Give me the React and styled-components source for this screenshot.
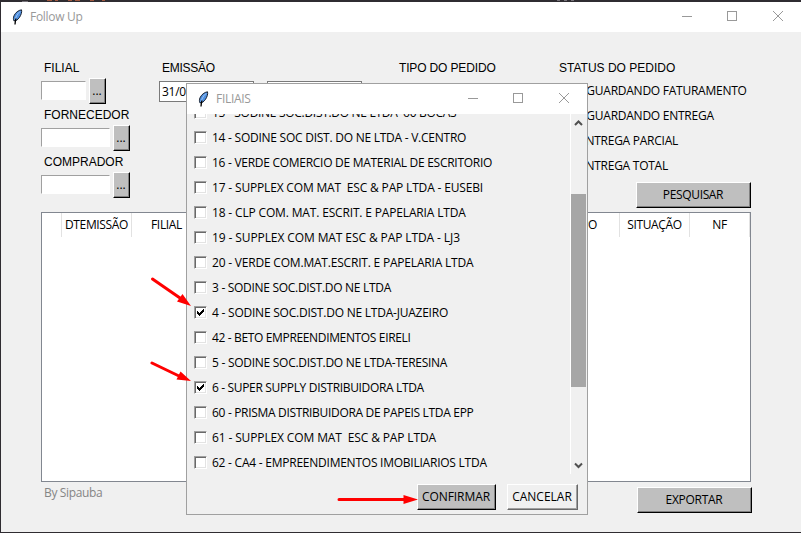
import React from 'react';
import styled, { createGlobalStyle } from 'styled-components';

const Global = createGlobalStyle`
  * { box-sizing: border-box; }
  body { margin: 0; overflow: hidden; }
`;

const UI_FONT = '"Open Sans", "Noto Sans", sans-serif';
const LABEL_FONT = '"Liberation Sans", Arial, sans-serif';

const Desktop = styled.div`
  position: relative;
  width: 801px;
  height: 533px;
  padding: 2px 0 1px 1px;
  background: #2f2c31;
  font: 12px/16px ${UI_FONT};
  color: #000;
  overflow: hidden;
`;

const EditorStrip = styled.svg`
  position: absolute;
  left: 0;
  top: 0;
`;

const Window = styled.main`
  display: flex;
  flex-direction: column;
  height: 530px;
  background: #f0f0f0;
`;

const TitleBar = styled.header`
  display: flex;
  align-items: center;
  flex: none;
  height: 30px;
  padding-left: 9px;
  background: #fff;
  color: #999;
`;

const Title = styled.span`
  flex: 1;
  margin-left: 6px;
  letter-spacing: -0.3px;
`;

const Controls = styled.svg`
  flex: none;
`;

const Text = styled.span`
  white-space: pre;
  letter-spacing: ${(p) => p.$track ?? -0.25}px;
`;

const Form = styled.section`
  display: grid;
  grid-template-columns: 118px 240px 160px 192px;
  height: 180px;
  padding: 27px 0 0 40px;
`;

const Column = styled.div`
  display: flex;
  flex-direction: column;
`;

const Label = styled.label`
  flex: none;
  height: 18px;
  margin-bottom: 1px;
  padding-left: ${(p) => p.$indent ?? 3}px;
  font: 12px/18px ${LABEL_FONT};
  letter-spacing: ${(p) => p.$track ?? 0}px;
  white-space: nowrap;
`;

const FieldRow = styled.div`
  display: flex;
  flex: none;
  gap: 3px;
  height: 26px;
  margin-bottom: 2px;
`;

const Entry = styled.div`
  width: ${(p) => p.$width}px;
  height: 19px;
  margin-top: 3px;
  background: #fff;
  border: 1px solid;
  border-color: #a0a0a0 #fff #fff #a0a0a0;
`;

const DateRow = styled(FieldRow)`
  gap: 13px;
`;

const DateEntry = styled.div`
  width: 95px;
  height: 21px;
  margin-top: 3px;
  padding: 1px 2px;
  background: #fff;
  border: 1px solid #7a7a7a;
  line-height: 18px;
  letter-spacing: -0.25px;
`;

const Button = styled.button`
  display: flex;
  align-items: center;
  justify-content: center;
  flex: none;
  width: ${(p) => p.$width}px;
  height: 26px;
  padding: 0 1px 0 0;
  border: 1px solid;
  border-color: ${(p) => (p.$light ? '#fff #696969 #696969 #fff' : '#fff #000 #000 #fff')};
  box-shadow: inset -1px -1px ${(p) => (p.$light ? '#a0a0a0' : '#808080')};
  background: ${(p) => (p.$light ? '#f0f0f0' : '#bfbfbf')};
  color: #000;
  font: 12px/16px ${UI_FONT};
`;

const CheckRow = styled.div`
  display: flex;
  align-items: center;
  flex: none;
  gap: 5px;
  height: 25px;
  padding-left: ${(p) => p.$indent}px;
`;

const Box = styled.span`
  display: block;
  width: 13px;
  height: 13px;
  background: #fff;
  border: 1px solid;
  border-color: #a0a0a0 #fff #fff #a0a0a0;
  box-shadow: inset 1px 1px #696969, inset -1px -1px #e3e3e3;

  svg { display: block; margin: -1px; }
`;

const SearchButton = styled(Button)`
  margin: 4px 0 0 77px;
`;

const Table = styled.section`
  flex: none;
  width: 710px;
  height: 270px;
  margin-left: 40px;
  background: #fff;
  border: 1px solid #828790;
`;

const TableHead = styled.div`
  display: grid;
  grid-template-columns: 20px 70px 70px 70px 70px 70px 70px 68px 70px 70px 60px;
  height: 24px;
`;

const HeadCell = styled.div`
  display: flex;
  align-items: center;
  justify-content: center;
  border-right: 1px solid #e2e2e2;
  white-space: nowrap;
`;

const Footer = styled.footer`
  display: flex;
  justify-content: space-between;
  width: 711px;
  margin: 5px 0 0 40px;
`;

const Credit = styled.span`
  margin: -2px 0 0 3px;
  color: #858585;
  letter-spacing: -0.35px;
`;

const Dialog = styled.section`
  position: absolute;
  left: 186px;
  top: 83px;
  display: flex;
  flex-direction: column;
  width: 402px;
  height: 432px;
  background: #f0f0f0;
  border: 1px solid #a0a0a0;
`;

const ListArea = styled.div`
  display: flex;
  flex: none;
  height: 360px;
  overflow: hidden;
`;

const List = styled.div`
  display: flex;
  flex: 1;
  flex-direction: column;
  min-width: 0;
  margin-top: -14px;
`;

const Scrollbar = styled.div`
  display: flex;
  flex-direction: column;
  width: 17px;
  border-left: 1px solid #fff;

  svg { display: block; flex: none; }
`;

const Track = styled.div`
  flex: 1;
  padding-top: 63px;
`;

const Thumb = styled.div`
  width: 15px;
  height: 193px;
  background: #a6a6a6;
`;

const Actions = styled.div`
  display: flex;
  justify-content: flex-end;
  gap: 11px;
  padding: 10px 9px 0 0;
`;

const Arrows = styled.svg`
  position: absolute;
  left: 0;
  top: 0;
  pointer-events: none;
`;

const BRANCHES = [
  { name: '15 - SODINE SOC.DIST.DO NE LTDA  60 BOCAS', track: -0.3 },
  { name: '14 - SODINE SOC DIST. DO NE LTDA - V.CENTRO', track: -0.25 },
  { name: '16 - VERDE COMERCIO DE MATERIAL DE ESCRITORIO', track: -0.28 },
  { name: '17 - SUPPLEX COM MAT  ESC & PAP LTDA - EUSEBI', track: -0.17 },
  { name: '18 - CLP COM. MAT. ESCRIT. E PAPELARIA LTDA', track: -0.16 },
  { name: '19 - SUPPLEX COM MAT ESC & PAP LTDA - LJ3', track: -0.1 },
  { name: '20 - VERDE COM.MAT.ESCRIT. E PAPELARIA LTDA', track: -0.2 },
  { name: '3 - SODINE SOC.DIST.DO NE LTDA', track: -0.3 },
  { name: '4 - SODINE SOC.DIST.DO NE LTDA-JUAZEIRO', track: -0.23, checked: true },
  { name: '42 - BETO EMPREENDIMENTOS EIRELI', track: -0.35 },
  { name: '5 - SODINE SOC.DIST.DO NE LTDA-TERESINA', track: -0.27 },
  { name: '6 - SUPER SUPPLY DISTRIBUIDORA LTDA', track: -0.34, checked: true },
  { name: '60 - PRISMA DISTRIBUIDORA DE PAPEIS LTDA EPP', track: -0.32 },
  { name: '61 - SUPPLEX COM MAT  ESC & PAP LTDA', track: -0.13 },
  { name: '62 - CA4 - EMPREENDIMENTOS IMOBILIARIOS LTDA', track: -0.24 },
];

const STATUSES = ['AGUARDANDO FATURAMENTO', 'AGUARDANDO ENTREGA', 'ENTREGA PARCIAL', 'ENTREGA TOTAL'];
const HEADERS = ['', 'DTEMISSÃO', 'FILIAL', '', '', '', '', '', 'TIPO', 'SITUAÇÃO', 'NF'];

const Feather = () => (
  <svg width="14" height="16" viewBox="0 0 14 16">
    <path d="M11.500.8C8.600 1.200 5.300 3.600 4 6.800c-.7 1.800-.8 3.600-.1 5l2.800-.5c2.200-1.700 3.900-4.200 4.600-6.800.4-1.300.5-2.600.2-3.700Z" fill="#4f8fe0" stroke="#17202e" strokeWidth="1" />
    <path d="M10 2.500C7.600 4.600 5.900 7.500 5.200 10.500" fill="none" stroke="#9cc6f5" strokeWidth="1" />
    <path d="M6 9.500C5.500 11 5.100 13 5 15.500" fill="none" stroke="#000" strokeWidth="1.300" />
  </svg>
);

const WindowControls = () => (
  <Controls width="138" height="30" fill="none" stroke="#999" shapeRendering="crispEdges">
    <path d="M19 14.500h10M64.500 9.500h9v9h-9Z" />
    <path d="m110 9 10 10m0-10-10 10" shapeRendering="auto" />
  </Controls>
);

const CheckBox = ({ checked }) => (
  <Box>
    {checked && (
      <svg width="13" height="13" viewBox="0 0 13 13" shapeRendering="crispEdges">
        <path d="M3 5h1v1h1v1h1v-1h1v-1h1v-1h1v-1h1v3h-1v1h-1v1h-1v1h-1v1h-1v-1h-1v-1h-1Z" />
      </svg>
    )}
  </Box>
);

const Chevron = ({ down }) => (
  <svg width="15" height="17" viewBox="0 0 15 17" fill="none" stroke="#505050" strokeWidth="2">
    <path d={down ? 'm4 6.500 3.500 3.500L11 6.500' : 'M4 11l3.500-3.500L11 11'} />
  </svg>
);

const Lookup = ({ label, width }) => (
  <>
    <Label>{label}</Label>
    <FieldRow>
      <Entry $width={width} />
      <Button $width={17}>...</Button>
    </FieldRow>
  </>
);

export default function App() {
  return (
    <Desktop>
      <Global />
      <EditorStrip width="801" height="2" shapeRendering="crispEdges">
        <path d="M47 .5h5m3 0h3m10 0h4m3 0h5m10 0h4m8 0h3" stroke="#a0583f" />
        <path d="M22 1.500h6M557 .5h3m4 0h3m4 0h3" stroke="#77737a" />
      </EditorStrip>
      <Window>
        <TitleBar>
          <Feather />
          <Title>Follow Up</Title>
          <WindowControls />
        </TitleBar>
        <Form>
          <Column>
            <Lookup label="FILIAL" width={45} />
            <Lookup label="FORNECEDOR" width={69} />
            <Lookup label="COMPRADOR" width={69} />
          </Column>
          <Column>
            <Label $track={-0.25}>EMISSÃO</Label>
            <DateRow>
              <DateEntry>31/07</DateEntry>
              <DateEntry />
            </DateRow>
          </Column>
          <Column>
            <Label $indent={0} $track={-0.15}>TIPO DO PEDIDO</Label>
          </Column>
          <Column>
            <Label $indent={0}>STATUS DO PEDIDO</Label>
            {STATUSES.map((s) => (
              <CheckRow key={s} $indent={2}>
                <CheckBox />
                <Text>{s}</Text>
              </CheckRow>
            ))}
            <SearchButton $width={115}><Text $track={-0.35}>PESQUISAR</Text></SearchButton>
          </Column>
        </Form>
        <Table>
          <TableHead>
            {HEADERS.map((h, i) => (
              <HeadCell key={i}><Text $track={-0.35}>{h}</Text></HeadCell>
            ))}
          </TableHead>
        </Table>
        <Footer>
          <Credit>By Sipauba</Credit>
          <Button $width={115}><Text $track={-0.28}>EXPORTAR</Text></Button>
        </Footer>
      </Window>
      <Dialog>
        <TitleBar>
          <Feather />
          <Title>FILIAIS</Title>
          <WindowControls />
        </TitleBar>
        <ListArea>
          <List>
            {BRANCHES.map((b) => (
              <CheckRow key={b.name} $indent={7}>
                <CheckBox checked={b.checked} />
                <Text $track={b.track}>{b.name}</Text>
              </CheckRow>
            ))}
          </List>
          <Scrollbar>
            <Chevron />
            <Track><Thumb /></Track>
            <Chevron down />
          </Scrollbar>
        </ListArea>
        <Actions>
          <Button $width={79}><Text $track={-0.05}>CONFIRMAR</Text></Button>
          <Button $width={71} $light><Text $track={0}>CANCELAR</Text></Button>
        </Actions>
      </Dialog>
      <Arrows width="801" height="533" stroke="#f00" fill="#f00" strokeWidth="3" strokeLinecap="round">
        <path d="M152.500 279 180 298M152 363l27 13M339 499.500h66" />
        <path d="m191 306-14-4.500 5.500-7.500ZM191 381l-14.500-1.500 4-8ZM418 499.500l-14.500 4.500v-9Z" stroke="none" />
      </Arrows>
    </Desktop>
  );
}
